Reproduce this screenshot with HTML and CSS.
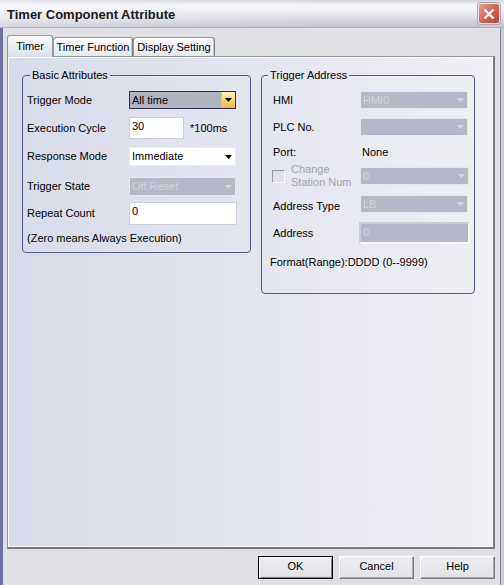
FILE: index.html
```html
<!DOCTYPE html>
<html>
<head>
<meta charset="utf-8">
<link rel="stylesheet" href="styles.css">
</head>
<body>
<div class="window">
  <div class="titlebar">
    <span class="title">Timer Component Attribute</span>
    <div class="close">
      <svg width="12" height="12" viewBox="0 0 12 12"><path d="M1.5 1.5l9 9M10.5 1.5l-9 9" stroke="#fff" stroke-width="2.2" fill="none"/></svg>
    </div>
  </div>
  <div class="body">
    <div class="tabs">
      <div class="tab tab-active tab-timer">Timer</div>
      <div class="tab tab-function">Timer Function</div>
      <div class="tab tab-display">Display Setting</div>
    </div>
    <div class="panel">
      <fieldset class="group group-basic">
        <legend>Basic Attributes</legend>
        <div class="row row-mode">
          <span class="lbl">Trigger Mode</span>
          <div class="combo combo-focus">
            <span class="val">All time</span>
            <span class="drop"><svg width="7" height="4" viewBox="0 0 7 4"><path d="M0 0h7L3.5 4z"/></svg></span>
          </div>
        </div>
        <div class="row row-cycle">
          <span class="lbl">Execution Cycle</span>
          <div class="edit edit-cycle">30</div>
          <span class="unit">*100ms</span>
        </div>
        <div class="row row-response">
          <span class="lbl">Response Mode</span>
          <div class="combo combo-white">
            <span class="val">Immediate</span>
            <span class="drop"><svg width="7" height="4" viewBox="0 0 7 4"><path d="M0 0h7L3.5 4z"/></svg></span>
          </div>
        </div>
        <div class="row row-state">
          <span class="lbl">Trigger State</span>
          <div class="combo combo-disabled combo-state">
            <span class="val">Off Reset</span>
            <span class="drop"><svg width="7" height="4" viewBox="0 0 7 4"><path d="M0 0h7L3.5 4z"/></svg></span>
          </div>
        </div>
        <div class="row row-repeat">
          <span class="lbl">Repeat Count</span>
          <div class="edit edit-repeat">0</div>
        </div>
        <div class="note">(Zero means Always Execution)</div>
      </fieldset>

      <fieldset class="group group-trigger">
        <legend>Trigger Address</legend>
        <div class="row row-hmi">
          <span class="lbl lbl-r">HMI</span>
          <div class="combo combo-disabled combo-r">
            <span class="val">HMI0</span>
            <span class="drop"><svg width="7" height="4" viewBox="0 0 7 4"><path d="M0 0h7L3.5 4z"/></svg></span>
          </div>
        </div>
        <div class="row row-plc">
          <span class="lbl lbl-r">PLC No.</span>
          <div class="combo combo-disabled combo-r">
            <span class="val"></span>
            <span class="drop"><svg width="7" height="4" viewBox="0 0 7 4"><path d="M0 0h7L3.5 4z"/></svg></span>
          </div>
        </div>
        <div class="row row-port">
          <span class="lbl lbl-r">Port:</span>
          <span class="static">None</span>
        </div>
        <div class="row row-station">
          <span class="lbl lbl-r lbl-check">
            <span class="check"></span>
            <span class="check-text">Change<br>Station Num</span>
          </span>
          <div class="combo combo-disabled combo-r combo-station">
            <span class="val">0</span>
            <span class="drop"><svg width="7" height="4" viewBox="0 0 7 4"><path d="M0 0h7L3.5 4z"/></svg></span>
          </div>
        </div>
        <div class="row row-type">
          <span class="lbl lbl-r lbl-low">Address Type</span>
          <div class="combo combo-disabled combo-r">
            <span class="val">LB</span>
            <span class="drop"><svg width="7" height="4" viewBox="0 0 7 4"><path d="M0 0h7L3.5 4z"/></svg></span>
          </div>
        </div>
        <div class="row row-address">
          <span class="lbl lbl-r">Address</span>
          <div class="edit edit-disabled">0</div>
        </div>
        <div class="format">Format(Range):DDDD (0--9999)</div>
      </fieldset>
    </div>
    <div class="buttons">
      <div class="btn btn-default">OK</div>
      <div class="btn">Cancel</div>
      <div class="btn">Help</div>
    </div>
  </div>
</div>
</body>
</html>
```

FILE: styles.css
```css
* { box-sizing: border-box; }
html, body { margin: 0; padding: 0; }
body {
  font-family: "Liberation Sans", Arial, sans-serif;
  font-size: 11px;
  line-height: 13px;
  color: #000;
  background: #e0dfe3;
}
.window {
  width: 504px;
  height: 585px;
  display: flex;
  flex-direction: column;
  overflow: hidden;
}

/* title bar */
.titlebar {
  height: 28px;
  flex: none;
  display: flex;
  align-items: center;
  justify-content: space-between;
  padding: 1px 4px 0 7px;
  background:
    linear-gradient(to right, rgba(255,255,255,0.35), rgba(255,255,255,0) 65%),
    linear-gradient(to bottom, #d4d4e0 0%, #f6f6f9 20%, #eeeef2 42%, #d6d6e0 75%, #c2c2d0 100%);
  border-bottom: 1px solid #b0b0c0;
}
.title {
  font-weight: bold;
  font-size: 13px;
  color: #1a1a1a;
}
.close {
  width: 22px;
  height: 21px;
  margin-top: -1px;
  border: 1px solid #f2dede;
  border-radius: 3px;
  background: linear-gradient(135deg, #e9a291 0%, #d46a5c 45%, #bf4036 100%);
  box-shadow: 0 0 0 1px #a8a8b8;
  display: flex;
  align-items: center;
  justify-content: center;
}

/* body */
.body {
  flex: 1;
  display: flex;
  flex-direction: column;
  background: #e0dfe3;
  border-left: 3px solid #6e70a0;
  border-right: 3px solid #cdcdd7;
  box-shadow: inset -1px 0 0 #84848f;
  padding: 0 6px 0 4px;
}

/* tabs */
.tabs {
  height: 28px;
  flex: none;
  display: flex;
  align-items: flex-end;
}
.tab {
  height: 19px;
  display: flex;
  align-items: center;
  justify-content: center;
  border: 1px solid #919b9c;
  border-bottom: 0;
  border-right-color: #7b8183;
  border-radius: 3px 3px 0 0;
  background: linear-gradient(#fdfdfe, #e8e8ee);
  box-shadow: inset -1px 0 0 #c4c4ca;
  white-space: nowrap;
}
.tab-active {
  position: relative;
  z-index: 2;
  height: 22px;
  margin-bottom: -1px;
  padding-bottom: 1px;
  border-right-color: #919b9c;
  box-shadow: none;
  background: linear-gradient(#fbfbfc, #dcdfeb);
}
.tab-timer { width: 46px; }
.tab-function { width: 80px; }
.tab-display { width: 82px; }

/* panel */
.panel {
  height: 493px;
  flex: none;
  border: 1px solid #919b9c;
  border-right: 2px solid #767b7d;
  border-bottom: 2px solid #767b7d;
  background: linear-gradient(to right, #d8dbe9, #efeff5);
  box-shadow: inset 1px 1px 0 #fcfcfe, inset -1px -1px 0 #f6f6f9;
  display: flex;
  align-items: flex-start;
  gap: 10px;
  padding: 12px 0 0 14px;
}

/* group boxes */
.group {
  margin: 0;
  min-width: 0;
  border: 1px solid #54578c;
  border-radius: 4px;
}
.group legend {
  padding: 0 2px;
  line-height: 13px;
}
.group-basic {
  width: 229px;
  padding: 9px 4px 7px 4px;
}
.group-basic legend { margin-left: 3px; }
.group-trigger {
  width: 214px;
  padding: 9px 2px 24px 11px;
}
.group-trigger legend { margin-left: -5px; }

.row {
  display: flex;
  align-items: center;
}
.lbl {
  flex: 0 0 102px;
  white-space: nowrap;
}
.lbl-r { flex-basis: 87px; }

.row-cycle { margin-top: 8px; }
.row-response { margin-top: 8px; }
.row-state { margin-top: 11px; }
.row-repeat { margin-top: 6px; }
.note { margin-top: 7px; height: 13px; white-space: nowrap; }

.row-plc { margin-top: 9px; }
.row-port { margin-top: 9px; height: 14px; }
.row-station { margin-top: 8px; height: 18px; }
.row-type { margin-top: 10px; height: 18px; }
.row-address { margin-top: 9px; }
.format { margin-top: 12px; margin-left: -3px; height: 13px; white-space: nowrap; }

.lbl-low { padding-top: 5px; }
.static { padding-left: 2px; }

.lbl-check {
  display: flex;
  align-items: center;
}
.check {
  width: 13px;
  height: 13px;
  margin-left: -1px;
  border: 1px solid;
  border-color: #9a9aa4 #fcfcfe #fcfcfe #9a9aa4;
  background: #e2e2e6;
  flex: none;
}
.check-text {
  margin-left: 6px;
  color: #a4a4ae;
  line-height: 13px;
}

/* combo boxes */
.combo {
  width: 107px;
  height: 18px;
  display: flex;
  align-items: center;
  border: 1px solid #e6e6ee;
}
.combo .val {
  flex: 1;
  padding-left: 2px;
  white-space: nowrap;
  overflow: hidden;
}
.combo .drop {
  width: 14px;
  height: 100%;
  display: flex;
  align-items: center;
  justify-content: center;
  flex: none;
}
.combo .drop svg { fill: #000; }
.combo-focus {
  border-color: #2e2f52;
  background: #b1b3bf;
}
.combo-focus .drop {
  background: linear-gradient(#fef1bc, #f9d277 55%, #f3b43a);
  border-left: 1px solid #e6c47a;
}
.combo-white {
  height: 19px;
  background: #fff;
  border-color: #ececf2;
}
.combo-disabled {
  background: #b6b8c8;
  color: #d3d4de;
}
.combo-disabled .drop svg { fill: #d6d7e0; }
.combo-state { height: 19px; }
.combo-r { width: 108px; }
.combo-station { width: 109px; }

/* edits */
.edit {
  background: #fff;
  border: 1px solid #cfcfd6;
  padding: 2px 2px 0 2px;
  white-space: nowrap;
}
.edit-cycle { width: 55px; height: 22px; }
.unit { margin-left: 6px; white-space: nowrap; }
.edit-repeat { width: 108px; height: 23px; }
.edit-disabled {
  width: 111px;
  height: 22px;
  margin-left: -1px;
  background: #b6b8c8;
  color: #d3d4de;
  border: 2px solid;
  border-color: #cdcdd8 #f8f8fb #f8f8fb #cdcdd8;
  padding: 2px 1px 0 2px;
}

/* buttons */
.buttons {
  display: flex;
  justify-content: flex-end;
  gap: 6px;
  margin-top: 7px;
}
.btn {
  width: 75px;
  height: 23px;
  display: flex;
  align-items: center;
  justify-content: center;
  padding-bottom: 2px;
  background: linear-gradient(#eeeef1, #e2e2e7);
  border: 1px solid;
  border-color: #ffffff #7a7a7a #7a7a7a #ffffff;
  box-shadow: inset -1px -1px 0 #a9a9b0;
}
.btn-default {
  border-color: #000;
  box-shadow: inset 1px 1px 0 #fff, inset -1px -1px 0 #808080;
}
```
